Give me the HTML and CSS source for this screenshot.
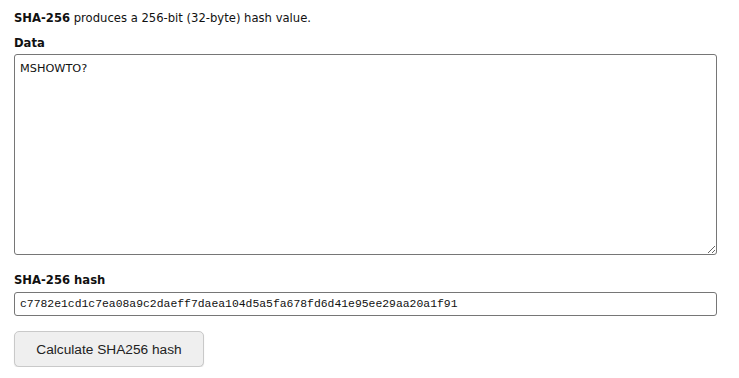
FILE: index.html
```html
<!DOCTYPE html>
<html>
<head>
<meta charset="utf-8">
<link rel="stylesheet" href="styles.css">
</head>
<body>
<div class="page">
  <p class="intro"><b>SHA-256</b> produces a 256-bit (32-byte) hash value.</p>
  <label class="lbl">Data</label>
  <textarea class="data">MSHOWTO?</textarea>
  <label class="lbl lbl-hash">SHA-256 hash</label>
  <input class="hash" type="text" value="c7782e1cd1c7ea08a9c2daeff7daea104d5a5fa678fd6d41e95ee29aa20a1f91">
  <button class="btn">Calculate SHA256 hash</button>
</div>
</body>
</html>
```
FILE: styles.css
```css
html, body { margin: 0; padding: 0; background: #fff; }
.page {
  display: flex;
  flex-direction: column;
  align-items: flex-start;
  padding: 10px 22px 0 14px;
  font-family: "DejaVu Sans", Verdana, sans-serif;
  font-size: 11.6px;
  color: #111;
}
.intro { margin: 0 0 9px 0; line-height: 16px; }
.lbl { font-weight: bold; line-height: 16px; margin-bottom: 3px; }
.lbl-hash { margin-top: 17px; margin-bottom: 4px; }
.data {
  box-sizing: border-box;
  width: 703px;
  height: 201px;
  margin: 0;
  padding: 7px 5px 5px;
  border: 1px solid #767676;
  border-radius: 3px;
  font-family: "DejaVu Sans", Verdana, sans-serif;
  font-size: 11.3px;
  line-height: 14px;
  color: #111;
  resize: vertical;
}
.hash {
  box-sizing: border-box;
  width: 703px;
  height: 24px;
  margin: 0;
  padding: 2px 5px;
  border: 1px solid #767676;
  border-radius: 3px;
  font-family: "Liberation Mono", "Courier New", monospace;
  font-size: 11.4px;
  color: #111;
}
.btn {
  box-sizing: border-box;
  margin-top: 15px;
  width: 190px;
  height: 36px;
  border: 1px solid #c9c9c9;
  border-radius: 5px;
  background: #efefef;
  font-family: "Liberation Sans", Arial, sans-serif;
  font-size: 13.7px;
  color: #222;
  box-shadow: 0 1px 1px rgba(0,0,0,0.12);
}
```
